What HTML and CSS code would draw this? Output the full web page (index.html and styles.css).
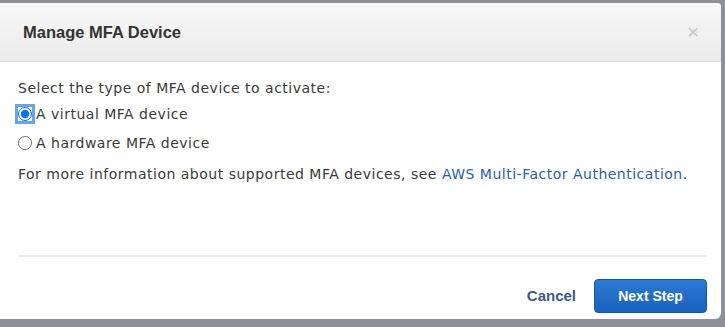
FILE: index.html
```html
<!DOCTYPE html>
<html lang="en">
<head>
    <meta charset="UTF-8">
    <title>Manage MFA Device</title>
    <link rel="stylesheet" href="styles.css">
</head>
<body>
    <div class="modal">
        <div class="modal-header">
            <h2 class="modal-title">Manage MFA Device</h2>
            <span class="modal-close">&times;</span>
        </div>
        <div class="modal-body">
            <p class="intro">Select the type of MFA device to activate:</p>
            <label class="option">
                <input type="radio" name="mfa" class="focused" checked>
                <span>A virtual MFA device</span>
            </label>
            <label class="option">
                <input type="radio" name="mfa">
                <span>A hardware MFA device</span>
            </label>
            <p class="info">For more information about supported MFA devices, see <a href="#">AWS Multi-Factor Authentication</a>.</p>
        </div>
        <div class="modal-footer">
            <a href="#" class="btn-cancel">Cancel</a>
            <button class="btn-next">Next Step</button>
        </div>
    </div>
</body>
</html>
```

FILE: styles.css
```css
body {
    margin: 0;
    padding: 3px 4px 8px 0;
    background-color: #8e8f99;
    font-family: "Liberation Sans", Arial, sans-serif;
    color: #333;
}
.modal {
    height: 316px;
    background-color: #fff;
    border-radius: 0 4px 6px 0;
    display: flex;
    flex-direction: column;
}
.modal-header {
    height: 58px;
    display: flex;
    align-items: center;
    justify-content: space-between;
    padding: 0 22px 0 23px;
    background: linear-gradient(#f7f7f7, #ebebeb);
    border-bottom: 1px solid #dcdcdc;
    border-radius: 0 4px 0 0;
}
.modal-title {
    margin: 0;
    font-size: 16.5px;
    font-weight: bold;
    color: #333;
}
.modal-close {
    font-size: 20px;
    color: #c4c4c4;
}
.modal-body {
    flex: 1;
    padding: 18px 18px 0 18px;
    font-family: "DejaVu Sans", "Liberation Sans", sans-serif;
    font-size: 14px;
    letter-spacing: 0.5px;
    color: #3a3a3a;
}
.intro {
    margin: 0 0 3px 0;
}
.option {
    display: flex;
    align-items: center;
    height: 29px;
}
.option input {
    margin: 0 4px 0 0;
    width: 14px;
    height: 14px;
}
.option input.focused {
    outline: 3px solid #6aa3e8;
    outline-offset: 0;
    border-radius: 3px;
}
.info {
    margin: 9px 0 0 0;
}
.info a {
    color: #2563a8;
    text-decoration: none;
}
.modal-footer {
    margin: 0 14px 0 18px;
    height: 40px;
    padding: 22px 0 0 0;
    border-top: 2px solid #ebebeb;
    display: flex;
    align-items: flex-start;
    justify-content: flex-end;
    gap: 18px;
}
.btn-cancel {
    margin-top: 8px;
    font-size: 15px;
    font-weight: bold;
    color: #3b5b86;
    text-decoration: none;
}
.btn-next {
    width: 113px;
    height: 34px;
    border: 1px solid #1456a8;
    border-radius: 4px;
    background: linear-gradient(#2b7ad3, #1a62bd);
    color: #fff;
    font-family: inherit;
    font-size: 14px;
    font-weight: bold;
}
```
